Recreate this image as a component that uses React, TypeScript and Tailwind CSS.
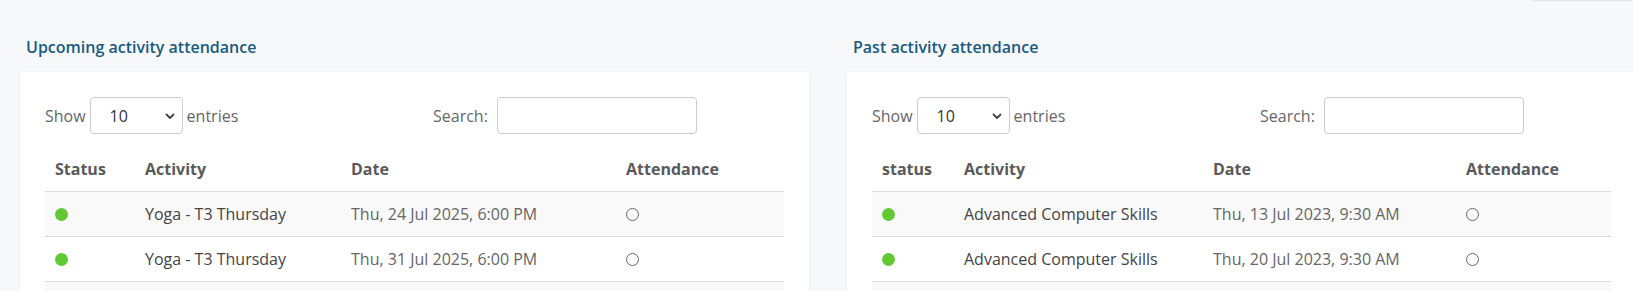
import React from "react";

type Row = { activity: string; date: string };

const upcoming: Row[] = [
  { activity: "Yoga - T3 Thursday", date: "Thu, 24 Jul 2025, 6:00 PM" },
  { activity: "Yoga - T3 Thursday", date: "Thu, 31 Jul 2025, 6:00 PM" },
  { activity: "Yoga - T3 Thursday", date: "Thu, 7 Aug 2025, 6:00 PM" },
];

const past: Row[] = [
  { activity: "Advanced Computer Skills", date: "Thu, 13 Jul 2023, 9:30 AM" },
  { activity: "Advanced Computer Skills", date: "Thu, 20 Jul 2023, 9:30 AM" },
  { activity: "Advanced Computer Skills", date: "Thu, 27 Jul 2023, 9:30 AM" },
];

function Panel({
  title,
  statusLabel,
  cols,
  rows,
}: {
  title: string;
  statusLabel: string;
  cols: string[];
  rows: Row[];
}) {
  return (
    <section className="w-[789px] shrink-0">
      <h2 className="pl-[6px] text-[16px] leading-5 font-semibold text-[#1a5b80] mb-[15px]">
        {title}
      </h2>
      <div className="bg-white rounded-[3px] shadow-[0_1px_4px_rgba(0,0,0,0.06)] p-[25px] pb-10">
        <div className="flex items-center h-[37px] text-[16px] text-[#666]">
          <div className="flex items-center w-[388px]">
            <span>Show</span>
            <div className="ml-[4px] mr-[4px] w-[93px] h-[37px] border border-[#ccc] rounded-[4px] flex items-center justify-between pl-[19px] pr-[6px] text-[#333]">
              <span>10</span>
              <svg width="12" height="12" viewBox="0 0 12 12" fill="none">
                <path d="M2.5 4.5L6 8L9.5 4.5" stroke="#444" strokeWidth="1.8" strokeLinecap="round" strokeLinejoin="round" />
              </svg>
            </div>
            <span>entries</span>
          </div>
          <span className="w-[57px]">Search:</span>
          <input
            type="text"
            className="ml-[7px] w-[200px] h-[37px] border border-[#ccc] rounded-[4px] outline-none"
          />
        </div>
        <table className="mt-[13px] w-[739px] table-fixed border-collapse text-[16px] leading-6">
          <colgroup>
            {cols.map((w, i) => (
              <col key={i} className={w} />
            ))}
          </colgroup>
          <thead>
            <tr className="border-b border-[#ddd]">
              <th className="px-[10px] py-[10px] text-left font-bold text-[#5a5a5a]">{statusLabel}</th>
              <th className="px-[10px] py-[10px] text-left font-bold text-[#5a5a5a]">Activity</th>
              <th className="px-[10px] py-[10px] text-left font-bold text-[#5a5a5a]">Date</th>
              <th className="px-[10px] py-[10px] text-left font-bold text-[#5a5a5a]">Attendance</th>
            </tr>
          </thead>
          <tbody>
            {rows.map((r, i) => (
              <tr key={i} className={`border-b border-[#ddd] ${i % 2 === 0 ? "bg-[#f9f9f9]" : "bg-white"}`}>
                <td className="px-[10px] py-[10px]">
                  <div className="w-[13px] h-[13px] rounded-full bg-[#62c935]" />
                </td>
                <td className="px-[10px] py-[10px] text-[#444] whitespace-nowrap">{r.activity}</td>
                <td className="px-[10px] py-[10px] text-[#666] whitespace-nowrap">{r.date}</td>
                <td className="px-[10px] py-[10px]">
                  <div className="w-[13px] h-[13px] rounded-full border border-[#666]" />
                </td>
              </tr>
            ))}
          </tbody>
        </table>
      </div>
    </section>
  );
}

export default function App() {
  return (
    <div className="w-[1633px] h-[291px] overflow-hidden bg-[#f7f8fa] font-['Open_Sans',sans-serif]">
      <div className="flex justify-end">
        <div className="w-[101px] h-px bg-[#e2e4e7]" />
      </div>
      <div className="flex gap-[38px] pl-5 pt-9">
        <Panel
          title="Upcoming activity attendance"
          statusLabel="Status"
          cols={["w-[90px]", "w-[206px]", "w-[275px]", "w-[168px]"]}
          rows={upcoming}
        />
        <Panel
          title="Past activity attendance"
          statusLabel="status"
          cols={["w-[82px]", "w-[249px]", "w-[253px]", "w-[155px]"]}
          rows={past}
        />
      </div>
    </div>
  );
}
